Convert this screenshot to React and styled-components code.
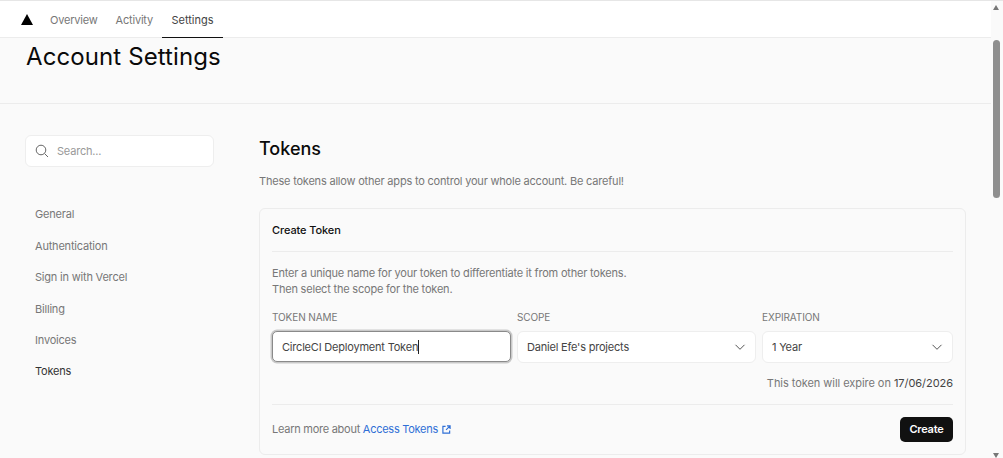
import React from "react";
import styled, { createGlobalStyle } from "styled-components";

const Global = createGlobalStyle`
  html, body { margin: 0; padding: 0; height: 100%; overflow: hidden; background: #fafafa; }
  body { font-family: Inter, "Liberation Sans", sans-serif; -webkit-font-smoothing: antialiased; }
  #root { height: 100%; }
  * { box-sizing: border-box; }
`;

const Page = styled.div`
  display: flex;
  flex-direction: column;
  width: 1003px;
  height: 458px;
  overflow: hidden;
  border-top: 1px solid #e6e6e6;
`;
const Frame = styled.div`
  display: flex;
  flex: 1;
  min-height: 0;
`;
const Main = styled.div`
  flex: 1;
  min-width: 0;
  overflow: hidden;
`;
const TopBar = styled.nav`
  display: flex;
  align-items: stretch;
  height: 37px;
  background: #fff;
  border-bottom: 1px solid #ececec;
  padding-left: 21px;
`;
const Logo = styled.svg`
  width: 12px;
  height: 11px;
  align-self: center;
  margin-right: 8px;
  margin-top: 1px;
`;
const Tab = styled.a`
  display: flex;
  align-items: center;
  padding: ${(p) => (p.$active ? "1px 9.5px 0" : "1px 9px 0")};
  margin-bottom: -1px;
  font-size: 11px;
  letter-spacing: ${(p) => (p.$active ? "0" : "-0.2px")};
  color: ${(p) => (p.$active ? "#444" : "#777")};
  border-bottom: 1.5px solid ${(p) => (p.$active ? "#111" : "transparent")};
`;
const Header = styled.header`
  height: 66px;
  padding: 3px 0 0 26px;
  border-bottom: 1px solid #ececec;
`;
const Title = styled.h1`
  margin: 0;
  font-size: 24px;
  line-height: 32px;
  font-weight: 400;
  color: #0a0a0a;
  letter-spacing: 0.1px;
`;
const Body = styled.div`
  display: flex;
  padding: 31px 25px 0 25px;
`;
const Side = styled.aside`
  width: 189px;
  flex: none;
  margin-right: 45px;
`;
const SearchBox = styled.div`
  display: flex;
  align-items: center;
  height: 32px;
  padding-left: 9px;
  gap: 8px;
  background: #fff;
  border: 1px solid #eee;
  border-radius: 6px;
  color: #666;
`;
const SearchText = styled.span`
  font-size: 11px;
  letter-spacing: -0.2px;
  color: #999;
`;
const SideNav = styled.div`
  display: flex;
  flex-direction: column;
  margin-top: 38.4px;
  padding-left: 10px;
`;
const SideItem = styled.a`
  height: 31.4px;
  line-height: 18px;
  font-size: 11px;
  color: ${(p) => (p.$active ? "#333" : "#777")};
  letter-spacing: -0.2px;
`;
const Content = styled.section`
  flex: 1;
  min-width: 0;
`;
const Heading = styled.h2`
  margin: 0;
  padding-top: 1px;
  font-size: 18px;
  line-height: 26px;
  font-weight: 500;
  color: #0a0a0a;
`;
const Lead = styled.p`
  margin: 10px 0 0;
  font-size: 11px;
  line-height: 18px;
  color: #777;
  letter-spacing: -0.2px;
`;
const Card = styled.div`
  margin-top: 18px;
  height: 247px;
  padding: 0 12px;
  border: 1px solid #ececec;
  border-radius: 6px;
  background: #fafafa;
`;
const CardTitle = styled.div`
  height: 43px;
  padding-top: 12px;
  font-size: 11px;
  line-height: 18px;
  font-weight: 500;
  color: #111;
  border-bottom: 1px solid #ececec;
  letter-spacing: -0.1px;
`;
const Help = styled.p`
  margin: 13px 0 0;
  font-size: 11px;
  line-height: 16px;
  color: #777;
  letter-spacing: -0.2px;
`;
const Fields = styled.div`
  display: grid;
  grid-template-columns: 239px 239px 191px;
  gap: 6px;
  margin-top: 13px;
`;
const Field = styled.div`
  display: flex;
  flex-direction: column;
`;
const Label = styled.label`
  font-size: 10px;
  line-height: 14px;
  letter-spacing: -0.1px;
  color: #777;
  margin-bottom: 7px;
`;
const Input = styled.div`
  display: flex;
  align-items: center;
  height: 31px;
  padding-left: 9px;
  font-size: 11px;
  letter-spacing: -0.2px;
  color: #444;
  background: #fff;
  border: 1px solid #8a8a8a;
  border-radius: 5px;
  box-shadow: 0 0 0 1.5px #c9c9c9;
`;
const Caret = styled.span`
  display: inline-block;
  width: 1px;
  height: 14px;
  background: #222;
`;
const Select = styled.div`
  display: flex;
  align-items: center;
  justify-content: space-between;
  height: 32px;
  padding: 0 9px 0 9px;
  font-size: 11px;
  letter-spacing: -0.2px;
  color: #444;
  background: #fff;
  border: 1px solid #eee;
  border-radius: 6px;
`;
const Expiry = styled.div`
  margin-top: 11px;
  height: 31px;
  text-align: right;
  font-size: 11px;
  line-height: 18px;
  color: #777;
  border-bottom: 1px solid #ececec;
  letter-spacing: -0.05px;
`;
const ExpiryDate = styled.span`
  color: #444;
`;
const Footer = styled.div`
  display: flex;
  align-items: center;
  justify-content: space-between;
  height: 50px;
  padding-bottom: 2px;
  font-size: 11px;
  color: #777;
  letter-spacing: -0.26px;
`;
const LearnMore = styled.span`
  display: flex;
  align-items: center;
  gap: 4px;
`;
const Link = styled.a`
  color: #2f6fd6;
`;
const Create = styled.button`
  width: 53px;
  height: 25px;
  padding: 0;
  border: none;
  border-radius: 5px;
  background: #111;
  color: #fff;
  font: 600 11px Inter, sans-serif;
  letter-spacing: -0.2px;
`;
const Scrollbar = styled.div`
  position: relative;
  flex: none;
  width: 12px;
  background: #fafafa;
`;
const ScrollThumb = styled.div`
  position: absolute;
  top: 39px;
  left: 2px;
  width: 7px;
  height: 158px;
  border-radius: 4px;
  background: #8f8f8f;
`;
const Arrow = styled.div`
  position: absolute;
  left: 2px;
  ${(p) => (p.$down ? "bottom: 0px;" : "top: 4px;")}
  width: 0;
  height: 0;
  border-left: 3.5px solid transparent;
  border-right: 3.5px solid transparent;
  ${(p) => (p.$down ? "border-top" : "border-bottom")}: 5px solid #777;
`;

const Chevron = () => (
  <svg width="12" height="12" viewBox="0 0 12 12" fill="none" stroke="#555" strokeWidth="1">
    <path d="M1.5 3.8 6 8.3l4.5-4.5" />
  </svg>
);

export default function App() {
  return (
    <>
      <Global />
      <Page>
        <Frame>
          <Main>
            <TopBar>
              <Logo viewBox="0 0 12 11"><path d="M6 0l6 11H0z" fill="#000" /></Logo>
              <Tab>Overview</Tab>
              <Tab>Activity</Tab>
              <Tab $active>Settings</Tab>
            </TopBar>
            <Header><Title>Account Settings</Title></Header>
            <Body>
              <Side>
                <SearchBox>
                  <svg width="14" height="14" viewBox="0 0 14 14" fill="none" stroke="#666" strokeWidth="1">
                    <circle cx="6" cy="6" r="4.8" />
                    <path d="M9.6 9.6 13 13" />
                  </svg>
                  <SearchText>Search...</SearchText>
                </SearchBox>
                <SideNav>
                  <SideItem>General</SideItem>
                  <SideItem>Authentication</SideItem>
                  <SideItem>Sign in with Vercel</SideItem>
                  <SideItem>Billing</SideItem>
                  <SideItem>Invoices</SideItem>
                  <SideItem $active>Tokens</SideItem>
                </SideNav>
              </Side>
              <Content>
                <Heading>Tokens</Heading>
                <Lead>These tokens allow other apps to control your whole account. Be careful!</Lead>
                <Card>
                  <CardTitle>Create Token</CardTitle>
                  <Help>
                    Enter a unique name for your token to differentiate it from other tokens.<br />
                    Then select the scope for the token.
                  </Help>
                  <Fields>
                    <Field>
                      <Label>TOKEN NAME</Label>
                      <Input>CircleCI Deployment Token<Caret /></Input>
                    </Field>
                    <Field>
                      <Label>SCOPE</Label>
                      <Select>Daniel Efe's projects<Chevron /></Select>
                    </Field>
                    <Field>
                      <Label>EXPIRATION</Label>
                      <Select>1 Year<Chevron /></Select>
                    </Field>
                  </Fields>
                  <Expiry>This token will expire on <ExpiryDate>17/06/2026</ExpiryDate></Expiry>
                  <Footer>
                    <LearnMore>
                      <span>Learn more about <Link>Access Tokens</Link></span>
                      <svg width="9" height="9" viewBox="0 0 10 10" fill="none" stroke="#2f6fd6" strokeWidth="1.3">
                        <path d="M4 1.5H1v7.5h7.5V6M5.5 1H9v3.5M9 1 4.5 5.5" />
                      </svg>
                    </LearnMore>
                    <Create>Create</Create>
                  </Footer>
                </Card>
              </Content>
            </Body>
          </Main>
          <Scrollbar>
            <Arrow />
            <ScrollThumb />
            <Arrow $down />
          </Scrollbar>
        </Frame>
      </Page>
    </>
  );
}
